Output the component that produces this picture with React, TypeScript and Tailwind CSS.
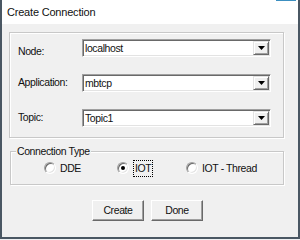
import React from "react";

const fields = [
  { label: "Node:", value: "localhost", labelClass: "pt-[7px]" },
  { label: "Application:", value: "mbtcp", labelClass: "" },
  { label: "Topic:", value: "Topic1", labelClass: "" },
];

function DropButton() {
  return (
    <div className="flex h-full w-[16px] items-center justify-center border border-t-[#e3e3e3] border-l-[#e3e3e3] border-r-[#696969] border-b-[#696969] bg-[#f0f0f0] shadow-[inset_1px_1px_0_#fff,inset_-1px_-1px_0_#a0a0a0]">
      <svg width="7" height="4" viewBox="0 0 7 4">
        <path d="M0 0h7L3.5 4z" fill="#000" />
      </svg>
    </div>
  );
}

function Combo({ value }: { value: string }) {
  return (
    <div className="flex h-[18px] w-[189px] border border-t-[#a0a0a0] border-l-[#a0a0a0] border-r-white border-b-white bg-white shadow-[inset_1px_1px_0_#696969,inset_-1px_-1px_0_#e3e3e3] p-[1px]">
      <div className="flex flex-1 items-center pl-[1px] leading-none">{value}</div>
      <DropButton />
    </div>
  );
}

function Radio({ label, checked, focused }: { label: string; checked?: boolean; focused?: boolean }) {
  return (
    <div className="flex items-center gap-[4px]">
      <div className="flex h-[12px] w-[12px] items-center justify-center rounded-full border border-t-[#a0a0a0] border-l-[#a0a0a0] border-r-white border-b-white bg-white shadow-[inset_1px_1px_0_#696969,inset_-1px_-1px_0_#e3e3e3]">
        {checked && <div className="h-[4px] w-[4px] rounded-full bg-black" />}
      </div>
      <span
        className={
          focused
            ? "border border-dotted border-black px-[1px] py-[1px] leading-[13px]"
            : "leading-[13px]"
        }
      >
        {label}
      </span>
    </div>
  );
}

function Button({ children }: { children: React.ReactNode }) {
  return (
    <div className="flex h-[21px] w-[52px] items-center justify-center border border-t-white border-l-white border-r-[#696969] border-b-[#696969] bg-[#f0f0f0] shadow-[inset_-1px_-1px_0_#a0a0a0]">
      {children}
    </div>
  );
}

export default function App() {
  return (
    <div className="h-[240px] w-[300px] bg-[#eef0f2] font-['Liberation_Sans',Arial,sans-serif] text-[10.5px] tracking-[-0.4px] text-[#111]">
      <div className="flex h-[239px] flex-col border-b-2 border-l-2 border-r-2 border-[#4a5763] bg-[#f0f0f0]">
        <div className="relative flex h-[24px] items-center bg-white pl-[5px] text-[11px] tracking-[-0.2px]">
          Create Connection
          <span className="absolute right-[2px] top-0 h-px w-[20px] bg-[#3c8fc0]" />
        </div>

        <div className="ml-[7px] mt-[8px] flex h-[106px] w-[275px] flex-col gap-[17px] border border-[#c8c8c8] pl-[8px] pt-[6px] shadow-[inset_1px_1px_0_#fff,1px_1px_0_#fff]">
          {fields.map((f) => (
            <div key={f.label} className="flex h-[18px] items-center">
              <span className={`w-[64px] self-stretch flex items-center ${f.labelClass}`}>{f.label}</span>
              <Combo value={f.value} />
            </div>
          ))}
        </div>

        <div className="relative ml-[8px] mt-[13px] flex h-[34px] w-[274px] items-center border border-[#c8c8c8] pl-[33px] shadow-[inset_1px_1px_0_#fff,1px_1px_0_#fff]">
          <span className="absolute left-[5px] top-[-7px] bg-[#f0f0f0] px-[1px] leading-[13px]">
            Connection Type
          </span>
          <div className="w-[73px]">
            <Radio label="DDE" />
          </div>
          <div className="w-[69px]">
            <Radio label="IOT" checked focused />
          </div>
          <Radio label="IOT - Thread" />
        </div>

        <div className="ml-[90px] mt-[15px] flex gap-[7px]">
          <Button>Create</Button>
          <Button>Done</Button>
        </div>
      </div>
    </div>
  );
}
